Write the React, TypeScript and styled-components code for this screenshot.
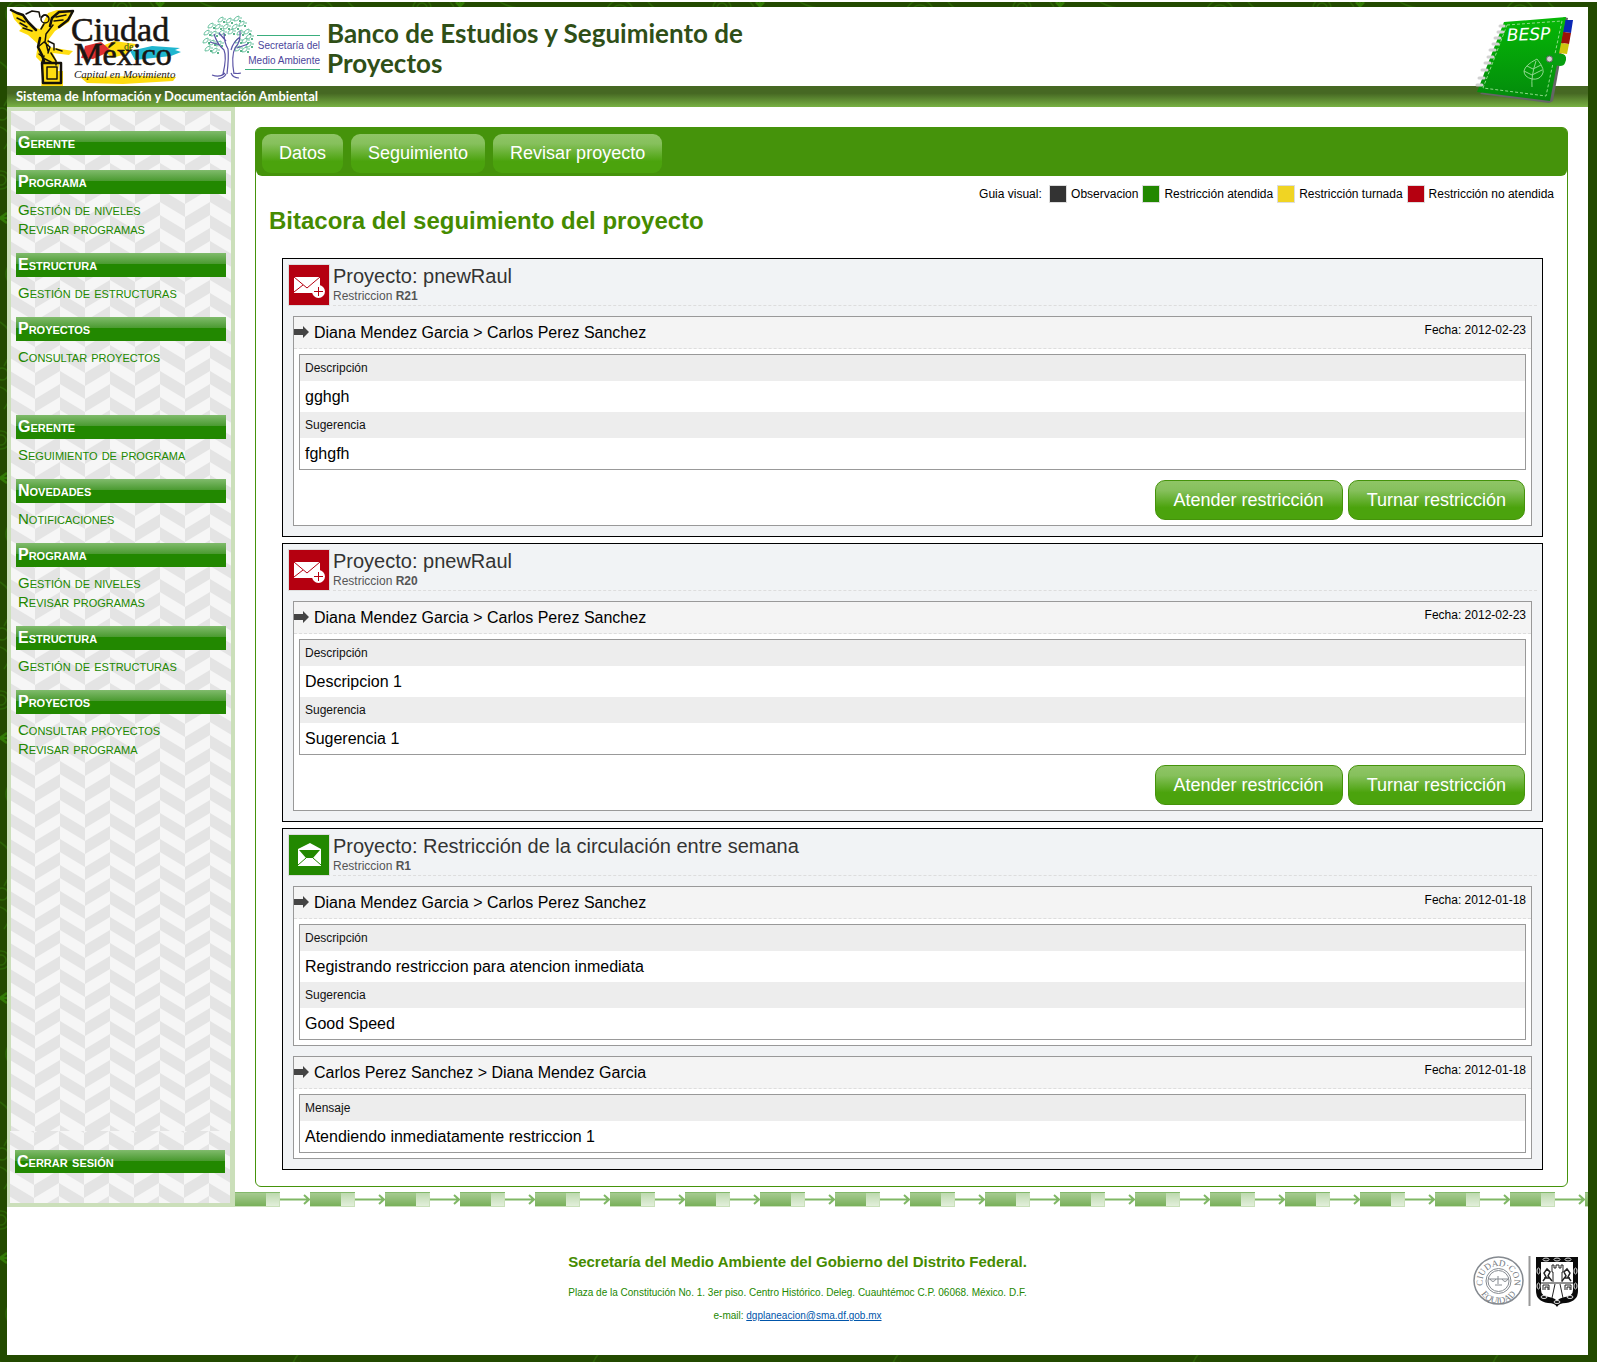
import React from "react";
import styled, { createGlobalStyle } from "styled-components";

const svgUrl = (markup: string) => `url("data:image/svg+xml,${encodeURIComponent(markup)}")`;

const swirls = svgUrl(
  `<svg xmlns="http://www.w3.org/2000/svg" width="300" height="260"><g fill="none" stroke="#2b6404" stroke-width="1.5"><circle cx="20" cy="12" r="14"/><circle cx="20" cy="12" r="9"/><circle cx="122" cy="6" r="9"/><circle cx="122" cy="6" r="5"/><path d="M48 0q8 10 26 14M200 0q14 8 30 6M150 0q6 6 5 12M0 60q22 14 4 44M0 125q16 6 4 22M300 50q-20 22 0 60M295 190q-14 16 5 34"/><circle cx="292" cy="140" r="6"/><circle cx="292" cy="140" r="3"/><circle cx="2" cy="112" r="6"/><circle cx="1" cy="178" r="9"/><circle cx="1" cy="178" r="5"/><circle cx="230" cy="252" r="12"/><circle cx="76" cy="254" r="4"/><path d="M55 245l-10 15M130 240l14 20"/></g><g stroke="#327a05" stroke-width="2.5"><path d="M0 216l7-5M0 216l7 5M0 216h8M290 165l8-5M290 165l8 5M290 165h8M160 4l-4-4M160 6v-6M160 4l4-4"/></g></svg>`
);

const chevrons = svgUrl(
  `<svg xmlns="http://www.w3.org/2000/svg" width="50" height="26"><rect width="50" height="26" fill="#f6f6f6"/><g fill="#e4e4e4"><path d="M0 0l25 15v13L0 13zM0 -26l25 15v13L0 -13zM0 26l25 15v13L0 39z"/><path d="M25 2L50 -13v13L25 15zM25 28L50 13v13L25 41z"/></g></svg>`
);

const GlobalStyle = createGlobalStyle`
  * { box-sizing: border-box; }
  body {
    margin: 0;
    background: #234a00;
    font-family: "Liberation Sans", Arial, Helvetica, sans-serif;
    font-size: 16px;
    color: #000;
  }
  h1, h2, h3, p, ul, dl, dd { margin: 0; padding: 0; }
  a { text-decoration: none; }
`;

const Shell = styled.div`
  padding: 5px 9px 7px 7px;
  border-top: 2px solid #fff;
  background: #234a00 ${swirls};
`;
const Page = styled.div`
  background: #fff;
`;

const Header = styled.header`
  position: relative;
`;
const Brand = styled.div`
  display: flex;
  height: 79px;
`;
const CityLogo = styled.svg`
  width: 190px;
  height: 79px;
  flex: none;
`;
const AgencyLogo = styled.svg`
  width: 130px;
  height: 79px;
  flex: none;
`;
const SiteTitle = styled.h1`
  width: 440px;
  padding-top: 11px;
  font: bold 26px/30px Lato, sans-serif;
  color: #2f4f17;
`;
const Strap = styled.div`
  height: 21px;
  padding-left: 9px;
  font: bold 13px/21px Lato, sans-serif;
  color: #fff;
  background: linear-gradient(#466823 0 35%, #78b143);
`;
const Notebook = styled.svg`
  position: absolute;
  top: 6px;
  right: 12px;
  width: 104px;
  height: 92px;
`;

const Columns = styled.div`
  display: flex;
`;
const Sidebar = styled.nav`
  display: flex;
  flex: none;
  flex-direction: column;
  width: 228px;
  background: #cbdfba;
`;
const MenuArea = styled.div`
  flex: 1;
  margin: 4px 4px 0;
  padding: 20px 5px 0;
  background: ${chevrons} -1px 0;
`;
const LogoutArea = styled.div`
  margin: 0 5px 4px 3px;
  padding: 19px 5px 30px;
  background: ${chevrons} -1px 0;
`;
const MenuGroup = styled.section<{ $last?: boolean }>`
  margin-bottom: ${(p) => (p.$last ? 49 : 15)}px;
`;
const MenuHeading = styled.h2`
  padding-left: 2px;
  font-size: 16px;
  line-height: 24px;
  font-variant: small-caps;
  color: #fff;
  background: linear-gradient(#80bb6c, #4a9a30 46%, #228800 46%);
`;
const LogoutLink = styled.a`
  display: block;
  padding-left: 2px;
  font-size: 16px;
  font-weight: bold;
  line-height: 23px;
  font-variant: small-caps;
  color: #fff;
  background: linear-gradient(#80bb6c, #4a9a30 46%, #228800 46%);
`;
const MenuList = styled.ul`
  padding: 6px 2px 0;
  list-style: none;
`;
const MenuLink = styled.a`
  display: block;
  font-size: 15px;
  line-height: 19px;
  font-variant: small-caps;
  color: #228800;
`;

const Main = styled.main`
  flex: 1;
  min-width: 0;
`;
const Panel = styled.div`
  margin: 20px 20px 5px;
  padding-bottom: 16px;
  border: 1px solid #45930b;
  border-radius: 6px;
`;
const TabBar = styled.nav`
  display: flex;
  gap: 8px;
  padding: 6px 6px 3px;
  border-radius: 4px 4px 6px 6px;
  background: #45930b;
`;
const Tab = styled.a`
  padding: 0 17px;
  border-radius: 9px;
  font-size: 18px;
  line-height: 39px;
  color: #fff;
  background: linear-gradient(#8fc566, #86c05c 25%, #4ba30d 70%);
`;
const Legend = styled.div`
  display: flex;
  justify-content: flex-end;
  gap: 4px;
  padding: 9px 13px 3px;
  font-size: 12px;
  line-height: 18px;
`;
const LegendItem = styled.span`
  display: flex;
  gap: 4px;
`;
const Swatch = styled.i<{ $color: string }>`
  width: 18px;
  height: 18px;
  border: 1px solid #ddd;
  background: ${(p) => p.$color};
`;
const Title = styled.h1`
  padding: 0 13px;
  font-size: 24px;
  line-height: 30px;
  color: #458b00;
`;
const Cards = styled.div`
  display: grid;
  gap: 6px;
  padding: 22px 24px 0 26px;
`;
const Card = styled.article`
  padding: 5px 5px 10px;
  border: 1px solid #000;
  background: #f1f3f5;
`;
const CardHead = styled.header`
  display: flex;
  gap: 3px;
`;
const StateIcon = styled.svg`
  width: 42px;
  height: 42px;
  flex: none;
  border: 1px solid #ddd;
`;
const CardTitles = styled.div`
  flex: 1;
  border-bottom: 1px dashed #ddd;
`;
const Project = styled.h2`
  font-size: 20px;
  font-weight: normal;
  line-height: 24px;
  color: #333;
`;
const Restriction = styled.p`
  font-size: 12px;
  line-height: 17px;
  color: #555;
`;
const Entry = styled.section`
  margin: 10px 5px 0;
  border: 1px solid #999;
  background: #fff;
`;
const EntryHead = styled.header`
  display: flex;
  align-items: flex-start;
  gap: 5px;
  padding-right: 5px;
  line-height: 31px;
  border-bottom: 1px dashed #ddd;
  background: #f4f4f4;
`;
const ArrowIcon = styled.svg`
  width: 15px;
  height: 12px;
  margin-top: 9px;
`;
const People = styled.h3`
  flex: 1;
  font-size: 16px;
  font-weight: normal;
`;
const DateText = styled.span`
  padding-top: 4px;
  font-size: 12px;
  line-height: 18px;
`;
const Details = styled.dl`
  && { margin: 5px; }
  border: 1px solid #999;
`;
const Term = styled.dt`
  padding-left: 5px;
  font-size: 12px;
  line-height: 26px;
  color: #111;
  background: #ededed;
`;
const Value = styled.dd`
  && { padding-left: 5px; }
  line-height: 31px;
`;
const Actions = styled.div`
  display: flex;
  justify-content: flex-end;
  gap: 5px;
  padding: 5px 6px 5px;
`;
const ActionButton = styled.button`
  height: 40px;
  padding: 0 18px;
  border: 1px solid #45930b;
  border-radius: 10px;
  font: 18px "Liberation Sans", Arial, sans-serif;
  color: #fff;
  background: linear-gradient(#8fc566, #86c05c 25%, #4ba30d 70%);
`;
const Strip = styled.svg`
  display: block;
  width: 100%;
  height: 15px;
`;

const Footer = styled.footer`
  position: relative;
  padding: 46px 0 32px;
  text-align: center;
  color: #228800;
`;
const Agency = styled.p`
  padding-bottom: 6px;
  font-size: 15px;
  font-weight: bold;
  line-height: 18px;
  color: #458b00;
`;
const Address = styled.p`
  && { padding-top: 9px; }
  font-size: 10px;
  line-height: 14px;
`;
const Mail = styled.a`
  && { text-decoration: underline; }
  color: #0055aa;
`;
const Seals = styled.svg`
  position: absolute;
  top: 49px;
  right: 8px;
  width: 108px;
  height: 52px;
`;

function CdmxLogo() {
  return (
    <CityLogo viewBox="7 7 190 79" role="img" aria-label="Ciudad de México">
      <g fill="#ffdd10">
        <path d="M11 10l9 3 8 7 6 8 6 1 3-6 5-10 9-3 17 0-5 12-14 9-6 8 0 8 24 4-4 4-16-2 6 12-1 6h5v17H41l2-17-1-8-6-6 2-13-10-9-9-4 3-3-8-9z" />
        <path d="M100 47l14-6 22 3-10 10-14 4zM80 77l60-1 36 1-3 4-50 3-36-1z" />
      </g>
      <path d="M85 46l16-4 6 5 4 4-18 8-12-1 3-8z" fill="#dd3030" />
      <path d="M130 51l22-5 28 2-5 2 6 2-10 4-36 4z" fill="#1fb6cf" />
      <g fill="none" stroke="#15120a" strokeWidth="1.500" strokeLinecap="round" strokeLinejoin="round">
        <path strokeWidth="2.500" d="M11 10l6 3 6 2 5 7 8 8M50 26l2-8 7-6 14-1-5 9-9 7M42 63h19v20H43zM40 38l-2 9 4 8 2 6" />
        <path d="M17 18l8 4M20 23l7 4M23 28l9 3M26 14l6-3 7 1 1 5M56 17l10-2M54 21l9-1M53 25l-7 9-1 8M48 41l6 3 0 6M38 47l6-5 6 5-2 6M46 43l2 8M44 56l-2 6M51 53l5 8 0 4M39 54l6 5 6 3M47 67v12h10V67zM56 49l6 2" />
        <circle cx="45" cy="19" r="4" />
        <path d="M42 17q3-4 6 0M44 24l-3 5" />
      </g>
      <g fontFamily="Liberation Serif, serif" fill="#191512">
        <text x="71" y="41" fontSize="34" stroke="#191512" strokeWidth="0.6">Ciudad</text>
        <text x="74" y="65" fontSize="32" stroke="#191512" strokeWidth="0.6">México</text>
        <text x="124" y="50" fontSize="10" fill="#284b1c">de</text>
        <text x="74" y="78" fontSize="11" fontStyle="italic">Capital en Movimiento</text>
      </g>
    </CityLogo>
  );
}

const LEAVES = [
  [221, 20], [229, 21], [237, 19], [242, 24], [211, 26], [218, 27], [226, 27], [235, 27], [207, 33],
  [214, 34], [222, 33], [231, 32], [240, 33], [247, 32], [206, 41], [212, 43], [238, 41], [245, 41],
  [249, 45], [208, 49], [215, 51], [238, 49], [245, 50], [219, 44], [249, 37],
];

function SedemaLogo() {
  return (
    <AgencyLogo viewBox="197 7 130 79" role="img" aria-label="Secretaría del Medio Ambiente">
      <g fill="none" stroke="#6ac2a0" strokeWidth="1">
        {LEAVES.map(([x, y]) => (
          <path key={`${x}-${y}`} d={`M${x - 3} ${y + 2}q0-4 5-5q1 5-5 5M${x + 3} ${y - 1}h2`} />
        ))}
      </g>
      <g fill="#239b65">
        {LEAVES.map(([x, y]) => (
          <circle key={`${x}-${y}`} cx={x + 3} cy={y + 2} r="1" />
        ))}
      </g>
      <g fill="none" stroke="#5a53a5" strokeWidth="1.200">
        <path d="M223 74q4-17 1-24-7-6-10-16M227 74q2-18 1-25-4-7-4-16M234 74q-3-18 1-26 6-6 5-17M231 50q2-8 9-13M220 45l-10-3M226 41l-7-8M237 48l11-4M212 75q8 3 13-2M218 79q6-1 8-5M231 73q2 5 8 5M234 73q3 1 7 0" />
      </g>
      <path d="M257 35.500h63M245 69.500h75" stroke="#3aae7d" />
      <g fill="#4b459b" fontFamily="Liberation Sans, sans-serif" fontSize="10" textAnchor="end">
        <text x="320" y="49">Secretaría del</text>
        <text x="320" y="64">Medio Ambiente</text>
      </g>
    </AgencyLogo>
  );
}

function BespNotebook() {
  return (
    <Notebook viewBox="1472 13 104 92" role="img" aria-label="BESP">
      <defs>
        <linearGradient id="cover" x1="0" y1="0" x2="0" y2="1">
          <stop offset="0" stopColor="#06b806" />
          <stop offset="1" stopColor="#038a0c" />
        </linearGradient>
      </defs>
      <path d="M1480 94l69 9 4-2 15-83-4-1z" fill="#656565" />
      <path d="M1565 20l8 0-2 13-8-1z" fill="#0a28b4" />
      <path d="M1563 32l8 1-2 11-8-1z" fill="#9c1208" />
      <path d="M1560 43l9 1-2 10-9-1z" fill="#cfc60d" />
      <path d="M1504 22l62-5-16 84-73-9z" fill="url(#cover)" />
      <path d="M1507 25l55-4-16 75-63-8z" fill="none" stroke="#8edb89" strokeDasharray="3 2" />
      <path d="M1547 54h16q5 2 2 9-1 3-5 3l-13-2q-5-5 0-10z" fill="#079f10" />
      <circle cx="1549.500" cy="59" r="3" fill="#d2d2d2" stroke="#666" />
      <g stroke="#d1d1d1" strokeWidth="3" strokeLinecap="round">
        <path d="M1500 26h4M1498 32h5M1495 38h5M1493 44h5M1490 50h5M1488 57h5M1485 63h5M1482 70h5M1479 78h5M1477 85h5" />
      </g>
      <g fill="none" stroke="#91d890">
        <path d="M1537 59q9 11 5 16-3 5-10 4-8-2-8-8 1-6 13-12zM1536 61q-5 15-4 26M1524 71l8 4 10-5M1527 66l6 3 8-4" />
      </g>
      <text x="1507" y="41" fontFamily="DejaVu Sans, sans-serif" fontSize="17" fontStyle="italic" fill="#fff" transform="rotate(-2 1507 41)">BESP</text>
    </Notebook>
  );
}

function MailPlus() {
  return (
    <StateIcon viewBox="0 0 40 40" role="img" aria-label="Restricción no atendida">
      <rect width="40" height="40" fill="#b50010" />
      <path d="M5 12h26v16H5z" fill="#fff" />
      <path d="M5 12l13 11 13-11M5 27l9-7" fill="none" stroke="#b50010" />
      <circle cx="29.500" cy="26.500" r="6.500" fill="#fff" />
      <path d="M29.500 22v9M25 26.500h9" stroke="#b50010" />
    </StateIcon>
  );
}

function MailOpen() {
  return (
    <StateIcon viewBox="0 0 40 40" role="img" aria-label="Restricción atendida">
      <rect width="40" height="40" fill="#228800" />
      <path d="M9 14l12-6 11 6v17H9z" fill="#fff" />
      <path d="M10 15h21l-7 8h-7z" fill="#228800" />
      <path d="M9 30l8-7M32 30l-8-7" stroke="#228800" />
    </StateIcon>
  );
}

type Group = { title: string; links: string[]; last?: boolean };

const MENU: Group[] = [
  { title: "Gerente", links: [] },
  { title: "Programa", links: ["Gestión de niveles", "Revisar programas"] },
  { title: "Estructura", links: ["Gestión de estructuras"] },
  { title: "Proyectos", links: ["Consultar proyectos"], last: true },
  { title: "Gerente", links: ["Seguimiento de programa"] },
  { title: "Novedades", links: ["Notificaciones"] },
  { title: "Programa", links: ["Gestión de niveles", "Revisar programas"] },
  { title: "Estructura", links: ["Gestión de estructuras"] },
  { title: "Proyectos", links: ["Consultar proyectos", "Revisar programa"] },
];

type Message = { people: string; date: string; details: [string, string][]; open?: boolean };
type Log = { project: string; code: string; attended?: boolean; messages: Message[] };

const LOGS: Log[] = [
  {
    project: "pnewRaul",
    code: "R21",
    messages: [
      { people: "Diana Mendez Garcia > Carlos Perez Sanchez", date: "2012-02-23", details: [["Descripción", "gghgh"], ["Sugerencia", "fghgfh"]], open: true },
    ],
  },
  {
    project: "pnewRaul",
    code: "R20",
    messages: [
      { people: "Diana Mendez Garcia > Carlos Perez Sanchez", date: "2012-02-23", details: [["Descripción", "Descripcion 1"], ["Sugerencia", "Sugerencia 1"]], open: true },
    ],
  },
  {
    project: "Restricción de la circulación entre semana",
    code: "R1",
    attended: true,
    messages: [
      { people: "Diana Mendez Garcia > Carlos Perez Sanchez", date: "2012-01-18", details: [["Descripción", "Registrando restriccion para atencion inmediata"], ["Sugerencia", "Good Speed"]] },
      { people: "Carlos Perez Sanchez > Diana Mendez Garcia", date: "2012-01-18", details: [["Mensaje", "Atendiendo inmediatamente restriccion 1"]] },
    ],
  },
];

const LEGEND = [
  ["#333333", "Observacion"],
  ["#228800", "Restricción atendida"],
  ["#f0d423", "Restricción turnada"],
  ["#b50010", "Restricción no atendida"],
];

function LogCard({ log }: { log: Log }) {
  return (
    <Card>
      <CardHead>
        {log.attended ? <MailOpen /> : <MailPlus />}
        <CardTitles>
          <Project>Proyecto: {log.project}</Project>
          <Restriction>
            Restriccion <b>{log.code}</b>
          </Restriction>
        </CardTitles>
      </CardHead>
      {log.messages.map((m) => (
        <Entry key={m.people}>
          <EntryHead>
            <ArrowIcon viewBox="0 0 15 12" aria-hidden="true">
              <path d="M0 3h9V0l6 6-6 6V9H0z" fill="#444" />
            </ArrowIcon>
            <People>{m.people}</People>
            <DateText>Fecha: {m.date}</DateText>
          </EntryHead>
          <Details>
            {m.details.map(([term, value]) => (
              <React.Fragment key={term}>
                <Term>{term}</Term>
                <Value>{value}</Value>
              </React.Fragment>
            ))}
          </Details>
          {m.open && (
            <Actions>
              <ActionButton type="button">Atender restricción</ActionButton>
              <ActionButton type="button">Turnar restricción</ActionButton>
            </Actions>
          )}
        </Entry>
      ))}
    </Card>
  );
}

function ArrowStrip() {
  return (
    <Strip aria-hidden="true">
      <defs>
        <linearGradient id="block" x1="0" y1="0" x2="0" y2="1">
          <stop offset="0" stopColor="#a6ca90" />
          <stop offset="1" stopColor="#78b05a" />
        </linearGradient>
        <linearGradient id="pale" x1="0" y1="0" x2="0" y2="1">
          <stop offset="0" stopColor="#bdd9ae" />
          <stop offset="1" stopColor="#e2efdb" />
        </linearGradient>
        <pattern id="links" width="75" height="15" patternUnits="userSpaceOnUse">
          <rect width="45" height="15" fill="#c9e0ba" />
          <rect width="45" height="1" fill="#83b96b" />
          <rect y="1" width="31" height="13" fill="url(#block)" />
          <rect x="31" y="1" width="13" height="13" fill="url(#pale)" />
          <path d="M45 7.500h29M69 3l5 4.500-5 4.500" fill="none" stroke="#80b765" strokeWidth="2" />
        </pattern>
      </defs>
      <rect width="100%" height="15" fill="url(#links)" />
    </Strip>
  );
}

function FooterSeals() {
  return (
    <Seals viewBox="0 0 108 52" role="img" aria-label="Ciudad con equidad">
      <defs>
        <path id="arcTop" d="M11 30a16 16 0 1 1 31 0" />
        <path id="arcBottom" d="M6 27a20.500 20.500 0 0 0 41 0" />
      </defs>
      <g fill="none" stroke="#858a90">
        <ellipse cx="26.500" cy="24.500" rx="24.500" ry="23.500" strokeWidth="1.500" />
        <circle cx="26.500" cy="25" r="12.500" />
        <circle cx="26.500" cy="25" r="10.500" />
        <path d="M17 23h19M18 23q3 5 6 0M30 23q3 5 6 0M26 20v8M23 29h7" />
      </g>
      <g fill="#747980" fontFamily="Liberation Serif, serif" fontSize="9" textAnchor="middle">
        <text><textPath href="#arcTop" startOffset="50%">CIUDAD·CON</textPath></text>
        <text><textPath href="#arcBottom" startOffset="50%">EQUIDAD</textPath></text>
      </g>
      <path d="M57.500 0v50" stroke="#999" strokeWidth="2" />
      <path d="M64 1h42v34q0 10-12 12-7 0-9 4-2-4-9-4-12-2-12-12z" fill="#0a0a0a" />
      <path d="M69 6h32v28q0 6-8 7-6 1-8 4-2-3-8-4-8-1-8-7z" fill="#fff" />
      <g fill="none" stroke="#222" strokeWidth="1">
        <path d="M81 26v-10h-1V9h2v3h2V9h3v3h2V9h2v7h-1v10M83 28l-3 14M88 28l3 14M69 27h32M71 34v-5h6v5M73 34v-3h3v3M93 34v-5h6v5M95 34v-3h3v3" />
        <path d="M71 25l3-4-2-4 3-4 3 3-2 4 4 5M99 25l-3-4 2-4-3-4-3 3 2 4-4 5M72 22h6M92 22h6" strokeWidth="1.500" />
      </g>
      <g fill="none" stroke="#ddd">
        <ellipse cx="74" cy="3.500" rx="3" ry="1.500" />
        <ellipse cx="85" cy="3.500" rx="3" ry="1.500" />
        <ellipse cx="96" cy="3.500" rx="3" ry="1.500" />
        <ellipse cx="66.500" cy="15" rx="1.500" ry="3" />
        <ellipse cx="103.500" cy="15" rx="1.500" ry="3" />
        <ellipse cx="66.500" cy="30" rx="1.500" ry="3" />
        <ellipse cx="103.500" cy="30" rx="1.500" ry="3" />
        <ellipse cx="72" cy="41" rx="3" ry="1.500" />
        <ellipse cx="98" cy="41" rx="3" ry="1.500" />
        <ellipse cx="85" cy="46" rx="3" ry="1.500" />
      </g>
    </Seals>
  );
}

export default function App() {
  return (
    <Shell>
      <GlobalStyle />
      <Page>
        <Header>
          <Brand>
            <CdmxLogo />
            <SedemaLogo />
            <SiteTitle>Banco de Estudios y Seguimiento de Proyectos</SiteTitle>
          </Brand>
          <Strap>Sistema de Información y Documentación Ambiental</Strap>
          <BespNotebook />
        </Header>
        <Columns>
          <Sidebar>
            <MenuArea>
              {MENU.map((group, i) => (
                <MenuGroup key={i} $last={group.last}>
                  <MenuHeading>{group.title}</MenuHeading>
                  {group.links.length > 0 && (
                    <MenuList>
                      {group.links.map((link) => (
                        <li key={link}>
                          <MenuLink href="#">{link}</MenuLink>
                        </li>
                      ))}
                    </MenuList>
                  )}
                </MenuGroup>
              ))}
            </MenuArea>
            <LogoutArea>
              <LogoutLink href="#">Cerrar sesión</LogoutLink>
            </LogoutArea>
          </Sidebar>
          <Main>
            <Panel>
              <TabBar>
                <Tab href="#">Datos</Tab>
                <Tab href="#">Seguimiento</Tab>
                <Tab href="#">Revisar proyecto</Tab>
              </TabBar>
              <Legend>
                <span>Guia visual:&nbsp;</span>
                {LEGEND.map(([color, label]) => (
                  <LegendItem key={label}>
                    <Swatch $color={color} />
                    {label}
                  </LegendItem>
                ))}
              </Legend>
              <Title>Bitacora del seguimiento del proyecto</Title>
              <Cards>
                {LOGS.map((log) => (
                  <LogCard key={log.code} log={log} />
                ))}
              </Cards>
            </Panel>
            <ArrowStrip />
          </Main>
        </Columns>
        <Footer>
          <Agency>Secretaría del Medio Ambiente del Gobierno del Distrito Federal.</Agency>
          <Address>Plaza de la Constitución No. 1. 3er piso. Centro Histórico. Deleg. Cuauhtémoc C.P. 06068. México. D.F.</Address>
          <Address>
            e-mail: <Mail href="mailto:dgplaneacion@sma.df.gob.mx">dgplaneacion@sma.df.gob.mx</Mail>
          </Address>
          <FooterSeals />
        </Footer>
      </Page>
    </Shell>
  );
}
